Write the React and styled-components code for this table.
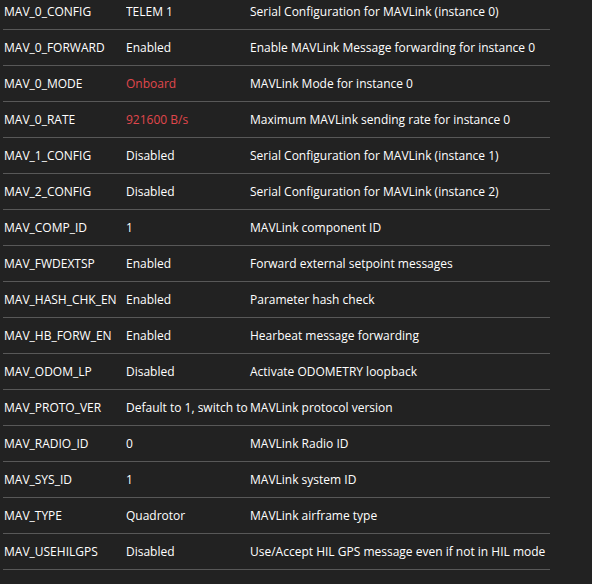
import React from 'react';
import styled, { createGlobalStyle } from 'styled-components';

const GlobalStyle = createGlobalStyle`
  html, body {
    margin: 0;
    padding: 0;
    background: #222222;
  }
  body {
    font-family: 'Open Sans', 'Noto Sans', sans-serif;
    overflow: hidden;
  }
`;

const params = [
  { name: 'MAV_0_CONFIG', value: 'TELEM 1', desc: 'Serial Configuration for MAVLink (instance 0)' },
  { name: 'MAV_0_FORWARD', value: 'Enabled', desc: 'Enable MAVLink Message forwarding for instance 0' },
  { name: 'MAV_0_MODE', value: 'Onboard', desc: 'MAVLink Mode for instance 0', changed: true },
  { name: 'MAV_0_RATE', value: '921600 B/s', desc: 'Maximum MAVLink sending rate for instance 0', changed: true },
  { name: 'MAV_1_CONFIG', value: 'Disabled', desc: 'Serial Configuration for MAVLink (instance 1)' },
  { name: 'MAV_2_CONFIG', value: 'Disabled', desc: 'Serial Configuration for MAVLink (instance 2)' },
  { name: 'MAV_COMP_ID', value: '1', desc: 'MAVLink component ID' },
  { name: 'MAV_FWDEXTSP', value: 'Enabled', desc: 'Forward external setpoint messages' },
  { name: 'MAV_HASH_CHK_EN', value: 'Enabled', desc: 'Parameter hash check' },
  { name: 'MAV_HB_FORW_EN', value: 'Enabled', desc: 'Hearbeat message forwarding' },
  { name: 'MAV_ODOM_LP', value: 'Disabled', desc: 'Activate ODOMETRY loopback' },
  { name: 'MAV_PROTO_VER', value: 'Default to 1, switch to 2 if GCS sends version 2', desc: 'MAVLink protocol version' },
  { name: 'MAV_RADIO_ID', value: '0', desc: 'MAVLink Radio ID' },
  { name: 'MAV_SYS_ID', value: '1', desc: 'MAVLink system ID' },
  { name: 'MAV_TYPE', value: 'Quadrotor', desc: 'MAVLink airframe type' },
  { name: 'MAV_USEHILGPS', value: 'Disabled', desc: 'Use/Accept HIL GPS message even if not in HIL mode' },
];

const ParamList = () => (
  <List>
    {params.map((p) => (
      <Row key={p.name}>
        <Name>{p.name}</Name>
        <Value changed={p.changed}>{p.value}</Value>
        <Desc>{p.desc}</Desc>
      </Row>
    ))}
  </List>
);

export default function App() {
  return (
    <>
      <GlobalStyle />
      <Page>
        <ParamList />
      </Page>
    </>
  );
}

const Page = styled.div`
  width: 592px;
  height: 584px;
  background: #222222;
  overflow: hidden;
`;

const List = styled.div`
  width: 547px;
  margin-left: 3px;
  margin-top: -6px;
  display: flex;
  flex-direction: column;
`;

const Row = styled.div`
  display: grid;
  grid-template-columns: 123px 123px 1fr;
  height: 35px;
  align-items: center;
  border-bottom: 1px solid #585858;
  font-size: 12px;
  color: #ffffff;
`;

const Name = styled.div`
  padding-left: 1px;
  white-space: nowrap;
  overflow: hidden;
`;

const Value = styled.div`
  white-space: nowrap;
  overflow: hidden;
  text-overflow: clip;
  padding-right: 2px;
  color: ${(p) => (p.changed ? '#e0474c' : '#ffffff')};
`;

const Desc = styled.div`
  padding-left: 1px;
  white-space: nowrap;
`;
